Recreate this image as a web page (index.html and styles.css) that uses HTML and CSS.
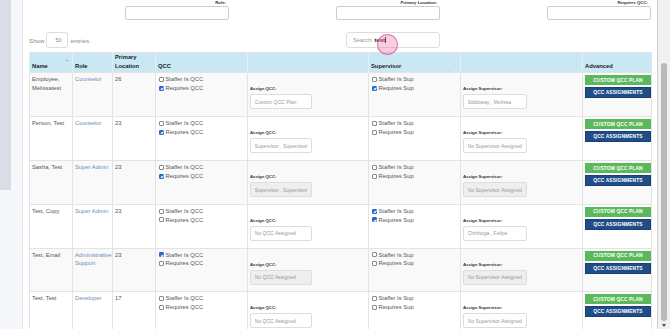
FILE: index.html
```html
<!DOCTYPE html>
<html>
<head>
<meta charset="utf-8">
<link rel="stylesheet" href="styles.css">
</head>
<body>

<div class="shell">
  <aside class="side"><div class="side-panel"></div></aside>

  <main class="content">
    <div class="filters">
      <div class="filter"><label>Role:</label><input type="text"></div>
      <div class="filter"><label>Primary Location:</label><input type="text"></div>
      <div class="filter"><label>Requires QCC:</label><input type="text"></div>
    </div>

    <div class="tools">
      <div class="length">Show <span class="length-box">50</span> entries</div>
      <div class="search">Search: <b>test</b><span class="caret"></span></div>
    </div>

    <table class="grid">
      <colgroup>
        <col style="width:43px"><col style="width:40px"><col style="width:43px"><col style="width:92px">
        <col style="width:121px"><col style="width:92px"><col style="width:122px"><col style="width:69px">
      </colgroup>
      <tr class="head">
        <th>Name<span class="sort sort-up"></span></th>
        <th>Role<span class="sort"></span></th>
        <th>Primary Location<span class="sort"></span></th>
        <th>QCC<span class="sort"></span></th>
        <th><span class="sort"></span></th>
        <th>Supervisor<span class="sort"></span></th>
        <th><span class="sort"></span></th>
        <th>Advanced<span class="sort"></span></th>
      </tr>

      <tr class="odd">
        <td>Employee, Melissatest</td>
        <td><a href="#">Counselor</a></td>
        <td>26</td>
        <td class="checks"><div class="check"><span class="box"></span>Staffer Is QCC</div><div class="check"><span class="box on"></span>Requires QCC</div></td>
        <td class="assign"><span class="assign-label">Assign QCC:</span><input type="text" value="Custom QCC Plan" readonly></td>
        <td class="checks"><div class="check"><span class="box"></span>Staffer Is Sup</div><div class="check"><span class="box on"></span>Requires Sup</div></td>
        <td class="assign"><span class="assign-label">Assign Supervisor:</span><input type="text" class="wide" value="Siddoway , Melissa" readonly></td>
        <td class="actions"><button class="btn btn-plan">CUSTOM QCC PLAN</button><button class="btn btn-assign">QCC ASSIGNMENTS</button></td>
      </tr>

      <tr>
        <td>Person, Test</td>
        <td><a href="#">Counselor</a></td>
        <td>23</td>
        <td class="checks"><div class="check"><span class="box"></span>Staffer Is QCC</div><div class="check"><span class="box on"></span>Requires QCC</div></td>
        <td class="assign"><span class="assign-label">Assign QCC:</span><input type="text" value="Supervisor , Supervisor" readonly></td>
        <td class="checks"><div class="check"><span class="box"></span>Staffer Is Sup</div><div class="check"><span class="box"></span>Requires Sup</div></td>
        <td class="assign"><span class="assign-label">Assign Supervisor:</span><input type="text" class="wide" value="No Supervisor Assigned" readonly></td>
        <td class="actions"><button class="btn btn-plan">CUSTOM QCC PLAN</button><button class="btn btn-assign">QCC ASSIGNMENTS</button></td>
      </tr>

      <tr class="odd">
        <td>Sasha, Test</td>
        <td><a href="#">Super Admin</a></td>
        <td>23</td>
        <td class="checks"><div class="check"><span class="box"></span>Staffer Is QCC</div><div class="check"><span class="box on"></span>Requires QCC</div></td>
        <td class="assign"><span class="assign-label">Assign QCC:</span><input type="text" class="locked" value="Supervisor , Supervisor" readonly></td>
        <td class="checks"><div class="check"><span class="box"></span>Staffer Is Sup</div><div class="check"><span class="box"></span>Requires Sup</div></td>
        <td class="assign"><span class="assign-label">Assign Supervisor:</span><input type="text" class="wide locked" value="No Supervisor Assigned" readonly></td>
        <td class="actions"><button class="btn btn-plan">CUSTOM QCC PLAN</button><button class="btn btn-assign">QCC ASSIGNMENTS</button></td>
      </tr>

      <tr>
        <td>Test, Copy</td>
        <td><a href="#">Super Admin</a></td>
        <td>23</td>
        <td class="checks"><div class="check"><span class="box"></span>Staffer Is QCC</div><div class="check"><span class="box"></span>Requires QCC</div></td>
        <td class="assign"><span class="assign-label">Assign QCC:</span><input type="text" value="No QCC Assigned" readonly></td>
        <td class="checks"><div class="check"><span class="box on"></span>Staffer Is Sup</div><div class="check"><span class="box on"></span>Requires Sup</div></td>
        <td class="assign"><span class="assign-label">Assign Supervisor:</span><input type="text" class="wide" value="Chiriboga , Felipe" readonly></td>
        <td class="actions"><button class="btn btn-plan">CUSTOM QCC PLAN</button><button class="btn btn-assign">QCC ASSIGNMENTS</button></td>
      </tr>

      <tr class="odd">
        <td>Test, Email</td>
        <td><a href="#">Administrative Support</a></td>
        <td>23</td>
        <td class="checks"><div class="check"><span class="box on"></span>Staffer Is QCC</div><div class="check"><span class="box"></span>Requires QCC</div></td>
        <td class="assign"><span class="assign-label">Assign QCC:</span><input type="text" class="locked" value="No QCC Assigned" readonly></td>
        <td class="checks"><div class="check"><span class="box"></span>Staffer Is Sup</div><div class="check"><span class="box"></span>Requires Sup</div></td>
        <td class="assign"><span class="assign-label">Assign Supervisor:</span><input type="text" class="wide locked" value="No Supervisor Assigned" readonly></td>
        <td class="actions"><button class="btn btn-plan">CUSTOM QCC PLAN</button><button class="btn btn-assign">QCC ASSIGNMENTS</button></td>
      </tr>

      <tr>
        <td>Test, Test</td>
        <td><a href="#">Developer</a></td>
        <td>17</td>
        <td class="checks"><div class="check"><span class="box"></span>Staffer Is QCC</div><div class="check"><span class="box"></span>Requires QCC</div></td>
        <td class="assign"><span class="assign-label">Assign QCC:</span><input type="text" value="No QCC Assigned" readonly></td>
        <td class="checks"><div class="check"><span class="box"></span>Staffer Is Sup</div><div class="check"><span class="box"></span>Requires Sup</div></td>
        <td class="assign"><span class="assign-label">Assign Supervisor:</span><input type="text" class="wide" value="No Supervisor Assigned" readonly></td>
        <td class="actions"><button class="btn btn-plan">CUSTOM QCC PLAN</button><button class="btn btn-assign">QCC ASSIGNMENTS</button></td>
      </tr>
    </table>
  </main>

  <div class="scrollbar"><div class="thumb"></div><span class="arrow"></span></div>
</div>

<div class="tap"></div>

</body>
</html>
```

FILE: styles.css
```css
* {
  box-sizing: border-box;
}

body {
  margin: 0;
  font-family: "Liberation Sans", Arial, sans-serif;
  background: #fff;
  overflow: hidden;
}

.shell {
  display: flex;
  height: 329px;
  overflow: hidden;
}

.side {
  width: 23px;
  flex: none;
  background: #f5f7fa;
  border-right: 1px solid #e2e5ea;
}

.side-panel {
  width: 11px;
  height: 190px;
  background: #d8dde6;
}

.content {
  flex: 1;
  min-width: 0;
  padding: 0 6px;
}

/* filter boxes above the table */
.filters {
  display: grid;
  grid-template-columns: repeat(3, 104px);
  column-gap: 107px;
  justify-content: end;
}

.filter label {
  display: block;
  text-align: right;
  font-size: 4.3px;
  font-weight: bold;
  line-height: 5px;
  margin-bottom: 1px;
  padding-right: 3px;
  color: #333;
}

.filter input {
  display: block;
  width: 104px;
  height: 14px;
  border: 1px solid #ccc;
  border-radius: 2px;
  background: #fff;
}

.tools {
  display: flex;
  align-items: center;
  justify-content: space-between;
  height: 16px;
  margin-top: 12px;
  padding-right: 211px;
}

.length {
  display: flex;
  align-items: center;
  gap: 2px;
  font-size: 6.2px;
  color: #888;
}

.length-box {
  width: 22px;
  height: 16px;
  border: 1px solid #ddd;
  border-radius: 3px;
  padding-left: 8px;
  font-size: 5.5px;
  line-height: 14px;
  color: #888;
}

.search {
  width: 94px;
  height: 16px;
  border: 1px solid #ddd;
  border-radius: 3px;
  padding-left: 6px;
  font-size: 5.8px;
  line-height: 14px;
  color: #999;
}

.search b {
  color: #222;
}

.caret {
  display: inline-block;
  width: 0.6px;
  height: 6px;
  margin-left: 0.5px;
  vertical-align: -1px;
  background: #222;
}

/* main table */
.grid {
  width: 622px;
  margin-top: 4px;
  table-layout: fixed;
  border-collapse: collapse;
  border: 1px solid #e3e3e3;
  font-size: 5.8px;
  line-height: 8.7px;
  color: #555;
}

.grid th {
  position: relative;
  height: 20px;
  padding: 0 2px 2px;
  vertical-align: bottom;
  text-align: left;
  font-weight: bold;
  color: #222;
  background: #c9e8f4;
  border-left: 1px solid #dcf0f8;
}

.sort {
  position: absolute;
  right: 3px;
  top: 7px;
  width: 3px;
  height: 5px;
}

.sort::before,
.sort::after {
  content: "";
  position: absolute;
  left: 0;
  border-left: 1.3px solid transparent;
  border-right: 1.3px solid transparent;
}

.sort::before {
  top: 0;
  border-bottom: 1.6px solid #b9c7cd;
}

.sort::after {
  bottom: 0;
  border-top: 1.6px solid #b9c7cd;
}

.sort-up::before {
  border-bottom-color: #4b6a8a;
}

.sort-up::after {
  display: none;
}

.grid tr:not(.head) {
  height: 43.8px;
}

.grid td {
  padding: 2px 2px;
  vertical-align: top;
  border: 1px solid #e3e3e3;
}

.grid td.checks {
  padding-left: 3px;
}

.grid tr.odd td {
  background: #f9f9f9;
}

.grid a {
  color: #6d8db5;
  text-decoration: none;
}

.check {
  display: flex;
  align-items: center;
  gap: 1.5px;
  white-space: nowrap;
}

.box {
  position: relative;
  flex: none;
  width: 5px;
  height: 5px;
  border: 0.6px solid #8a8a8a;
  border-radius: 1px;
  background: #fff;
}

.box.on {
  border-color: #2468d6;
  background: #2468d6;
}

.box.on::after {
  content: "";
  position: absolute;
  left: 1.2px;
  top: 0.2px;
  width: 1.3px;
  height: 2.4px;
  border-right: 0.8px solid #fff;
  border-bottom: 0.8px solid #fff;
  transform: rotate(40deg);
}

.grid td.assign {
  padding: 13px 2px 0;
}

.assign-label {
  display: block;
  font-size: 4.3px;
  font-weight: bold;
  line-height: 6px;
  margin-bottom: 2px;
  color: #333;
}

.assign input {
  display: block;
  width: 62px;
  height: 15px;
  padding: 0 0 0 3.5px;
  border: 1px solid #ddd;
  border-radius: 2px;
  font-family: inherit;
  font-size: 5.1px;
  color: #999;
  background: #fff;
}

.assign input.wide {
  width: 64px;
}

.assign input.locked {
  background: #eee;
}

.grid td.actions {
  padding: 2px 2px 0;
}

.btn {
  display: block;
  width: 66px;
  padding: 0;
  border: none;
  font-family: inherit;
  font-size: 4.9px;
  font-weight: bold;
  color: #fff;
  text-align: center;
  letter-spacing: 0.1px;
}

.btn-plan {
  height: 10px;
  background: #5cb85c;
}

.btn-assign {
  height: 11px;
  margin-top: 2px;
  background: #1f4d88;
  border: 1px solid #1a3f70;
}

/* page scrollbar */
.scrollbar {
  width: 13px;
  flex: none;
  display: flex;
  flex-direction: column;
  align-items: center;
  background: #f1f1f1;
  border-left: 1px solid #cfcfcf;
}

.thumb {
  flex: 1;
  width: 6px;
  margin-top: 63px;
  border-radius: 3px;
  background: #b9b9b9;
}

.arrow {
  width: 0;
  height: 0;
  margin: 3px 0 2px;
  border-left: 2.5px solid transparent;
  border-right: 2.5px solid transparent;
  border-top: 3px solid #505050;
}

/* click highlight from the recording */
.tap {
  position: absolute;
  left: 377px;
  top: 34px;
  width: 21px;
  height: 21px;
  border-radius: 50%;
  background: rgba(236, 110, 170, 0.35);
  border: 1px solid rgba(225, 70, 150, 0.75);
}
```
